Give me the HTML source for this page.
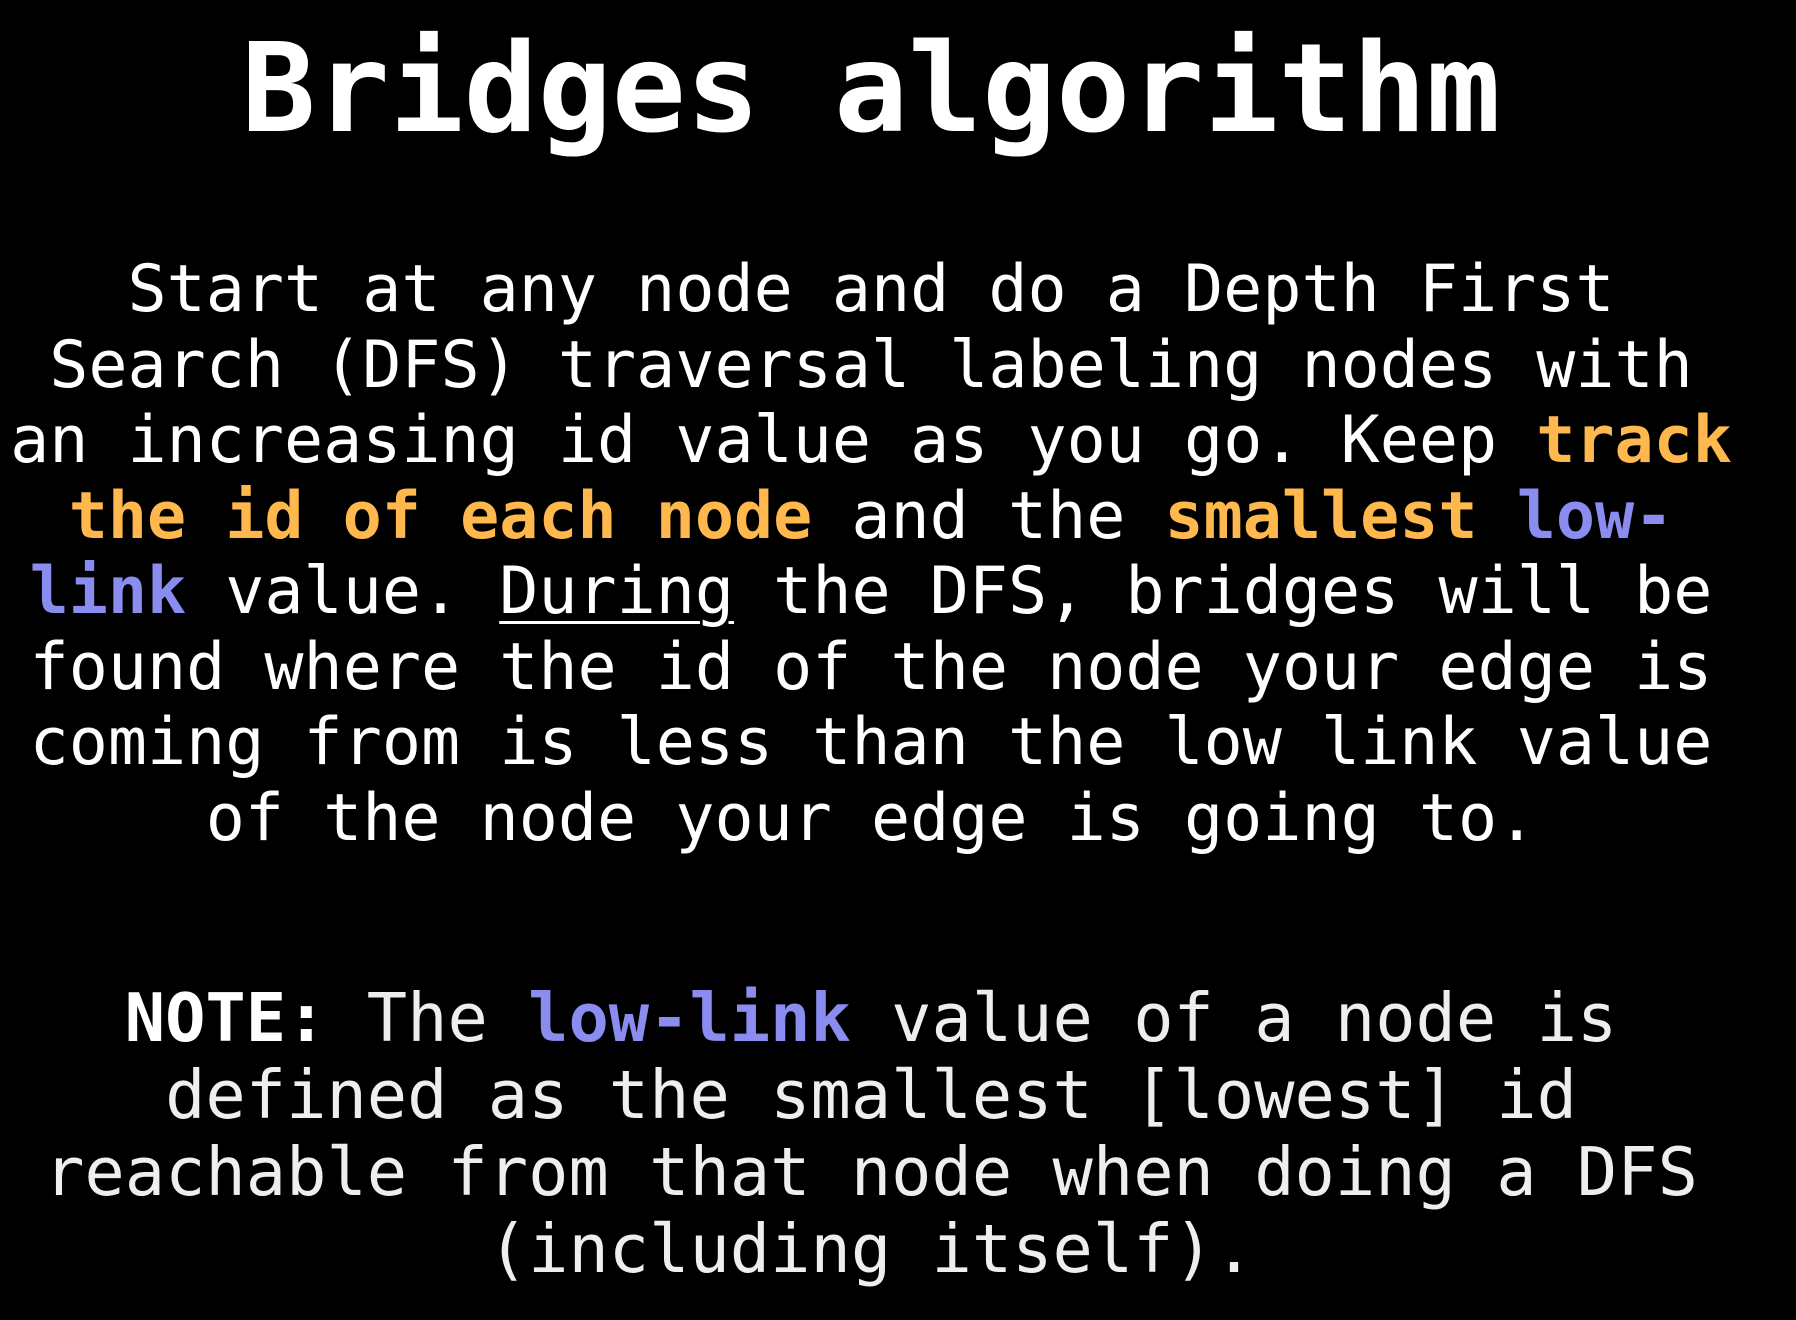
<!DOCTYPE html>
<html><head><style>
html,body{margin:0;padding:0;background:#000;width:1796px;height:1320px;overflow:hidden}
.m{font-family:"DejaVu Sans Mono","Liberation Mono",monospace;color:#fff;text-align:center;position:absolute;left:0;width:1742px;white-space:pre}
.t{top:20px;font-size:123px;font-weight:bold;line-height:140px}
.b{top:252px;font-size:65px;line-height:75.5px}
.n{top:980px;font-size:67px;line-height:77px;color:#eee}
.o{color:#ffb84d;font-weight:bold}
.p{color:#8a8cf0;font-weight:bold}
u{text-decoration-thickness:3px;text-underline-offset:8px}
</style></head><body>
<div class="m t">Bridges algorithm</div>
<div class="m b">Start at any node and do a Depth First
Search (DFS) traversal labeling nodes with
an increasing id value as you go. Keep <span class="o">track</span>
<span class="o">the id of each node</span> and the <span class="o">smallest</span> <span class="p">low-</span>
<span class="p">link</span> value. <u>During</u> the DFS, bridges will be
found where the id of the node your edge is
coming from is less than the low link value
of the node your edge is going to.</div>
<div class="m n"><b style="color:#fff">NOTE:</b> The <span class="p">low-link</span> value of a node is
defined as the smallest [lowest] id
reachable from that node when doing a DFS
(including itself).</div>
</body></html>
